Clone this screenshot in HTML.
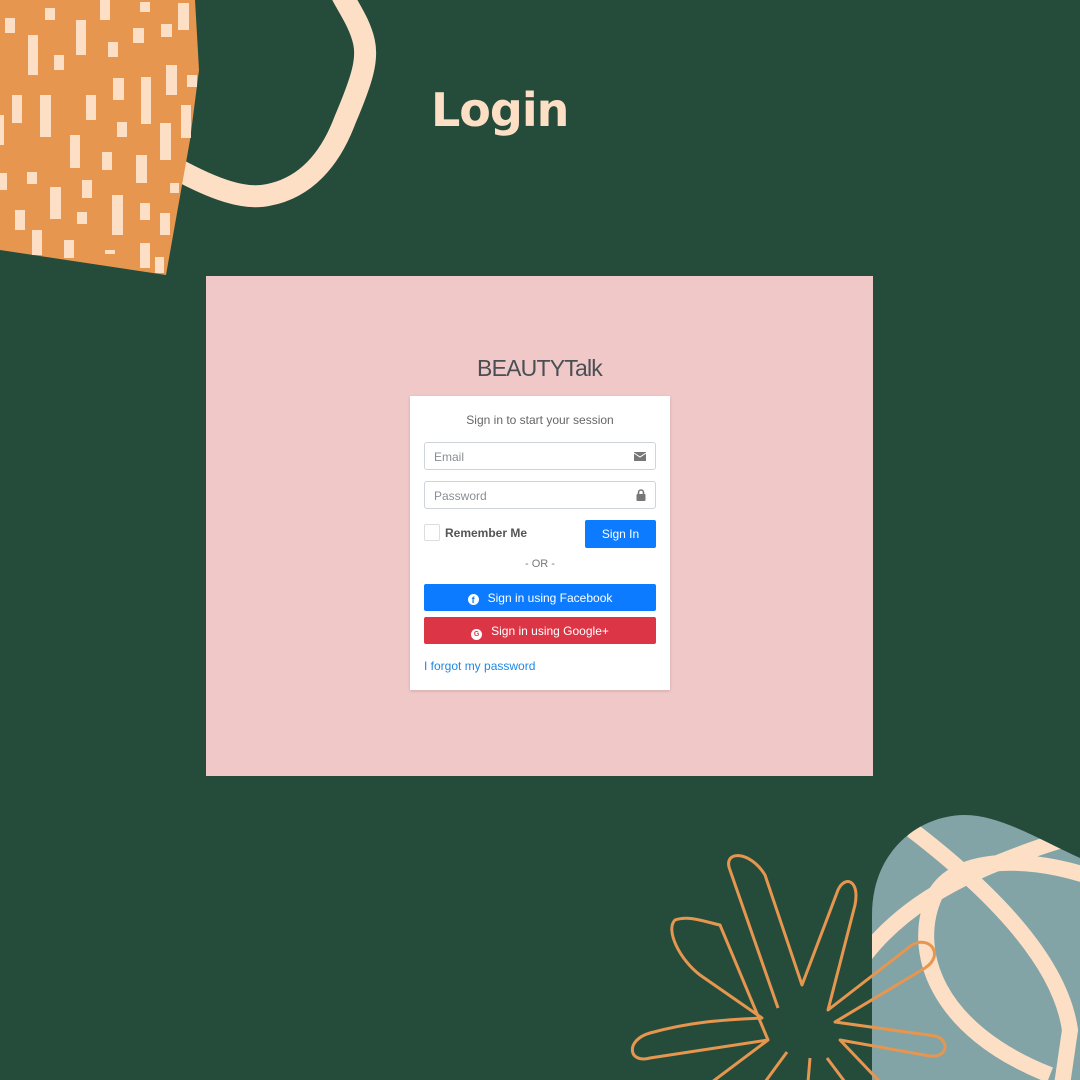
<!DOCTYPE html>
<html><head><meta charset="utf-8"><style>
*{box-sizing:border-box;margin:0;padding:0}
body{width:1080px;height:1080px;background:#254c3a;position:relative;overflow:hidden;font-family:"Liberation Sans",sans-serif}
.a{position:absolute}
#pink{left:206px;top:276px;width:667px;height:500px;background:#f0c8c8}
#title{left:206px;width:667px;top:355px;text-align:center;font-size:23px;color:#4a4f55;letter-spacing:-0.8px}
#box{left:410px;top:396px;width:260px;height:294px;background:#fff;box-shadow:0 1px 3px rgba(0,0,0,.15)}
.inp{position:absolute;left:14px;width:232px;height:28px;border:1px solid #ced4da;border-radius:3px;font-size:12px;color:#8a8f95;padding:7px 9px}
.btn{position:absolute;color:#fff;font-size:12px;text-align:center;border-radius:2px}
</style></head><body>
<svg class="a" style="left:0;top:0" width="1080" height="1080" viewBox="0 0 1080 1080">
<path d="M175,168 C215,190 245,200 268,195 C305,188 330,160 345,120 C362,80 368,60 364,42 C360,24 350,10 342,-5" fill="none" stroke="#fddfc6" stroke-width="22"/>
<polygon points="0,0 195,0 199,70 190,140 166,275 0,250" fill="#e6964f"/>
<g fill="#fddfc6">
<rect x="5" y="18" width="10" height="15"/><rect x="45" y="8" width="10" height="12"/><rect x="100" y="0" width="10" height="20"/><rect x="140" y="2" width="10" height="10"/><rect x="178" y="3" width="11" height="27"/><rect x="28" y="35" width="10" height="40"/><rect x="54" y="55" width="10" height="15"/><rect x="76" y="20" width="10" height="35"/><rect x="108" y="42" width="10" height="15"/><rect x="133" y="28" width="11" height="15"/><rect x="161" y="24" width="11" height="13"/><rect x="166" y="65" width="11" height="30"/><rect x="187" y="75" width="10" height="12"/><rect x="113" y="78" width="11" height="22"/><rect x="141" y="77" width="10" height="47"/><rect x="12" y="95" width="10" height="28"/><rect x="40" y="95" width="11" height="42"/><rect x="86" y="95" width="10" height="25"/><rect x="181" y="105" width="10" height="33"/><rect x="0" y="115" width="4" height="30"/><rect x="70" y="135" width="10" height="33"/><rect x="117" y="122" width="10" height="15"/><rect x="160" y="123" width="11" height="37"/><rect x="102" y="152" width="10" height="18"/><rect x="136" y="155" width="11" height="28"/><rect x="0" y="173" width="7" height="17"/><rect x="27" y="172" width="10" height="12"/><rect x="50" y="187" width="11" height="32"/><rect x="82" y="180" width="10" height="18"/><rect x="170" y="183" width="9" height="10"/><rect x="112" y="195" width="11" height="40"/><rect x="140" y="203" width="10" height="17"/><rect x="160" y="213" width="10" height="22"/><rect x="15" y="210" width="10" height="20"/><rect x="77" y="212" width="10" height="12"/><rect x="32" y="230" width="10" height="25"/><rect x="64" y="240" width="10" height="18"/><rect x="140" y="243" width="10" height="25"/><rect x="155" y="257" width="9" height="16"/><rect x="105" y="250" width="10" height="4"/>
</g>
<defs><clipPath id="bl"><path d="M872,1080 L872,915 C872,850 920,815 965,815 C1000,815 1040,840 1080,858 L1080,1080 Z"/></clipPath></defs>
<path d="M872,1080 L872,915 C872,850 920,815 965,815 C1000,815 1040,840 1080,858 L1080,1080 Z" fill="#82a4a7"/>
<g clip-path="url(#bl)" fill="none" stroke="#fddfc6" stroke-width="16">
<path d="M1085,875 C1020,855 955,858 935,895 C910,950 935,1030 1050,1075"/>
<path d="M912,830 C990,890 1060,960 1070,1030 L1062,1085"/>
<path d="M865,955 C900,910 950,882 1000,862 C1025,852 1050,843 1070,838"/>
</g>
<path d="M778,1008 L730,870 C722,850 750,850 765,875 L802,985 L838,890 C845,875 860,880 855,905 L828,1010 L912,945 C930,935 945,955 925,968 L835,1022 L935,1036 C950,1040 948,1058 930,1056 L840,1040 L880,1082 M827,1058 L845,1082 M810,1058 L808,1082 M787,1052 L765,1082 M768,1040 L712,1082 M768,1040 L650,1058 C628,1064 625,1040 650,1033 C690,1022 720,1020 762,1018 L700,975 C680,960 665,930 675,920 C690,915 705,922 720,925 Z" fill="none" stroke="#e6964f" stroke-width="3" stroke-linejoin="round"/>
</svg>
<div class="a" style="left:431px;top:83px;font-family:'DejaVu Sans',sans-serif;font-size:46px;font-weight:bold;color:#fddfc6;letter-spacing:-1px">Login</div>
<div class="a" id="pink"></div>
<div class="a" id="title">BEAUTYTalk</div>
<div class="a" id="box">
 <div class="a" style="left:0;width:260px;top:17px;text-align:center;font-size:12px;color:#666">Sign in to start your session</div>
 <div class="inp" style="top:46px">Email
  <svg style="position:absolute;right:9px;top:9px" width="12" height="9" viewBox="0 0 12 9"><rect width="12" height="9" fill="#777"/><path d="M0,1 L6,5 L12,1" fill="none" stroke="#fff" stroke-width="1"/></svg></div>
 <div class="inp" style="top:85px">Password
  <svg style="position:absolute;right:9px;top:7px" width="10" height="12" viewBox="0 0 10 12"><path d="M2.5,5 V3.5 A2.5,2.5 0 0 1 7.5,3.5 V5" fill="none" stroke="#777" stroke-width="1.6"/><rect x="0.5" y="5" width="9" height="7" rx="1" fill="#777"/></svg></div>
 <div class="a" style="left:14px;top:128px;width:16px;height:17px;border:1px solid #ddd;border-radius:2px"></div>
 <div class="a" style="left:35px;top:130px;font-size:12px;font-weight:bold;color:#555">Remember Me</div>
 <div class="btn" style="left:175px;top:124px;width:71px;height:28px;background:#0d7bff;line-height:28px">Sign In</div>
 <div class="a" style="left:0;width:260px;top:162px;text-align:center;font-size:11px;color:#777">- OR -</div>
 <div class="btn" style="left:14px;top:188px;width:232px;height:27px;background:#0d7bff;line-height:28px"><span style="display:inline-block;width:11px;height:11px;border-radius:50%;background:#fff;color:#0d7bff;font-size:9px;line-height:12px;font-weight:bold;vertical-align:-1px;margin-right:9px">f</span>Sign in using Facebook</div>
 <div class="btn" style="left:14px;top:221px;width:232px;height:27px;background:#dc3545;line-height:28px"><span style="display:inline-block;width:11px;height:11px;border-radius:50%;background:#fff;color:#dc3545;font-size:7px;line-height:11px;font-weight:bold;vertical-align:-1px;margin-right:9px">G</span>Sign in using Google+</div>
 <div class="a" style="left:14px;top:263px;font-size:12px;color:#1e88e5">I forgot my password</div>
</div>
</body></html>
